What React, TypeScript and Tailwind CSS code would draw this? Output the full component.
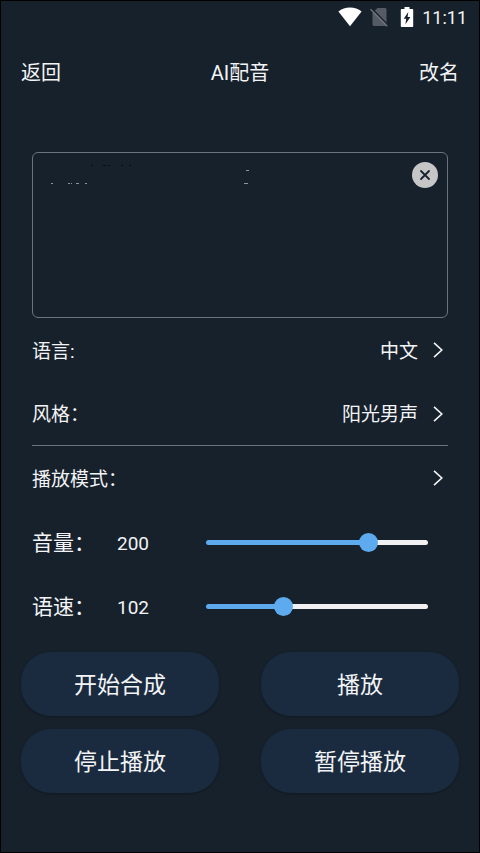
import React, { useState } from 'react';

const ChevronIcon: React.FC = () => (
    <svg className="ml-3.5 mr-1 h-4 w-3" viewBox="0 0 12 16" fill="none" stroke="currentColor" strokeWidth="1.6" aria-hidden="true">
        <path d="M2 .8 9.8 8 2 15.2" />
    </svg>
);

const StatusBar: React.FC = () => (
    <div className="flex h-8 items-center justify-end pr-3 font-['Roboto',sans-serif] text-[18px]">
        <svg className="mr-2 h-5 w-6" viewBox="0 0 24 20" fill="#fff" aria-hidden="true">
            <path d="M12 19.3.4 4.6C3.6 1.9 7.6.5 12 .5s8.4 1.4 11.6 4.1z" />
        </svg>
        <svg className="mr-3 h-5 w-[18px]" viewBox="0 0 18 20" aria-hidden="true">
            <path d="M7.5 1H15c.8 0 1.5.6 1.5 1.500V17.500c0 .8-.7 1.500-1.500 1.500H4c-.8 0-1.500-.7-1.500-1.500V6z" fill="#545b65" />
            <path d="M1.500 1.200 18 18" stroke="#17212c" strokeWidth="1.400" />
            <path d="M.5 2.200 17.200 19.200" stroke="#6d737b" strokeWidth="1.400" />
        </svg>
        <svg className="mr-2 h-5 w-[14px]" viewBox="0 0 14 20" aria-hidden="true">
            <path d="M4.500 0h5v2h2.700c.6 0 1 .4 1 1v16c0 .6-.4 1-1 1H1.800c-.6 0-1-.4-1-1V3c0-.6.4-1 1-1h2.700z" fill="#fff" />
            <path d="M8.300 5 3.700 11.800h2.500l-.8 5.400L10.400 10H7.600z" fill="#17212c" />
        </svg>
        <span>11:11</span>
    </div>
);

interface OptionRowProps {
    label: string;
    value?: string;
    divider?: boolean;
}

const OptionRow: React.FC<OptionRowProps> = ({ label, value, divider }) => (
    <button
        type="button"
        className={`flex h-16 w-full items-center justify-between text-[19px] ${divider ? 'border-b border-[#6b747c]' : ''}`}
    >
        <span className="pt-1">{label}</span>
        <span className="flex items-center">
            <span className="pt-1">{value}</span>
            <ChevronIcon />
        </span>
    </button>
);

interface SliderRowProps {
    id: string;
    label: string;
    value: number;
    max: number;
    onChange: (value: number) => void;
}

const SliderRow: React.FC<SliderRowProps> = ({ id, label, value, max, onChange }) => {
    const percent = (value / max) * 100;

    return (
        <div className="flex h-16 items-center">
            <label htmlFor={id} className="w-[85px] whitespace-nowrap pt-1 text-[21px]">{label}</label>
            <output htmlFor={id} className="w-[89px] pt-1 font-['Roboto',sans-serif] text-[19px]">{value}</output>
            <input
                id={id}
                type="range"
                min={0}
                max={max}
                value={value}
                onChange={e => onChange(Number(e.target.value))}
                className="mr-5 h-[5px] min-w-0 flex-1 cursor-pointer appearance-none rounded-full [&::-webkit-slider-thumb]:h-[19px] [&::-webkit-slider-thumb]:w-[19px] [&::-webkit-slider-thumb]:appearance-none [&::-webkit-slider-thumb]:rounded-full [&::-webkit-slider-thumb]:bg-[#5dabee]"
                style={{ background: `linear-gradient(to right, #5dabee ${percent}%, #f1f1f3 ${percent}%)` }}
            />
        </div>
    );
};

const ActionButton: React.FC<{ children: React.ReactNode }> = ({ children }) => (
    <button type="button" className="h-16 rounded-[30px] bg-[#1a2b40] pt-1 text-[23px] shadow-sm shadow-black/20">
        {children}
    </button>
);

const App: React.FC = () => {
    const [text, setText] = useState<string>('');
    const [volume, setVolume] = useState<number>(200);
    const [speed, setSpeed] = useState<number>(102);

    return (
        <div lang="zh-CN" className="min-h-screen border border-black bg-[#17212c] font-['Roboto','Noto_Sans_CJK_SC',sans-serif] text-gray-100">
            <StatusBar />
            <header className="grid h-20 grid-cols-3 items-center px-5 text-[20px]">
                <button type="button" className="justify-self-start">返回</button>
                <h1 className="justify-self-center">AI配音</h1>
                <button type="button" className="justify-self-end">改名</button>
            </header>

            <main className="pt-[39px]">
                <div className="px-[31px]">
                    <div className="relative">
                        <textarea
                            aria-label="配音文本"
                            value={text}
                            onChange={e => setText(e.target.value)}
                            className="block h-[166px] w-full resize-none rounded-md border border-[#6b747c] bg-transparent py-3 pl-4 pr-12 text-[19px] outline-none"
                        />
                        {/* faint specks behind the text */}
                        <svg className="pointer-events-none absolute left-4 top-2 h-7 w-52" viewBox="0 0 208 28" aria-hidden="true">
                            <path d="M43 5.500h2M55 5.500h3M60 5.500h2M73 5.500h2M81 5.500h2" stroke="#080d13" />
                            <path d="M3 23.500h2M20 23.500h2M23 23.500h1M28 23.500h3M37 23.500h2M198 10.500h3M196 23.500h4" stroke="#8d949b" />
                        </svg>
                        <button
                            type="button"
                            aria-label="清空"
                            onClick={() => setText('')}
                            className="absolute right-[10px] top-[10px] flex h-[26px] w-[26px] items-center justify-center rounded-full bg-[#c6c6c6] text-[#17212c]"
                        >
                            <svg className="h-3 w-3" viewBox="0 0 12 12" fill="none" stroke="currentColor" strokeWidth="1.800" strokeLinecap="round">
                                <path d="m2 2 8 8M10 2 2 10" />
                            </svg>
                        </button>
                    </div>

                    <OptionRow label="语言:" value="中文" />
                    <OptionRow label="风格：" value="阳光男声" divider />
                    <OptionRow label="播放模式：" />
                    <SliderRow id="volume" label="音量：" value={volume} max={265} onChange={setVolume} />
                    <SliderRow id="speed" label="语速：" value={speed} max={305} onChange={setSpeed} />
                </div>

                <div className="grid grid-cols-2 gap-x-[42px] gap-y-[13px] px-5 pb-10 pt-3.5">
                    <ActionButton>开始合成</ActionButton>
                    <ActionButton>播放</ActionButton>
                    <ActionButton>停止播放</ActionButton>
                    <ActionButton>暂停播放</ActionButton>
                </div>
            </main>
        </div>
    );
};

export default App;
